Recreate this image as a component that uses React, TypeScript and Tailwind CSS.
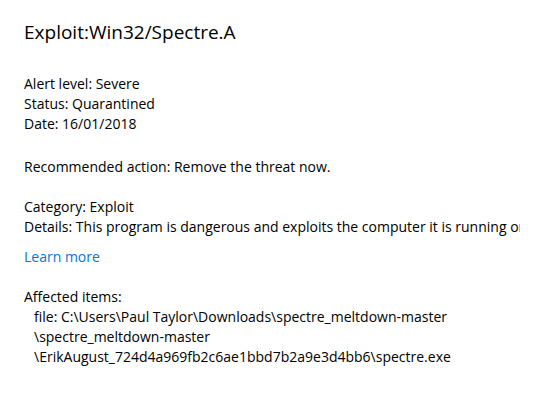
export default function App() {
  return (
    <div
      className="w-[544px] h-[402px] bg-white text-black overflow-hidden"
      style={{ fontFamily: '"Open Sans", "Noto Sans", sans-serif' }}
    >
      <div className="px-6 pt-[18px]">
        <h1 className="text-[19px] leading-[28px] font-normal">Exploit:Win32/Spectre.A</h1>

        <div className="mt-[28px] text-[14px] leading-[20px]">
          <p>Alert level: Severe</p>
          <p>Status: Quarantined</p>
          <p>Date: 16/01/2018</p>
        </div>

        <p className="mt-[23px] text-[14px] leading-[20px]">Recommended action: Remove the threat now.</p>

        <div className="mt-[20px] text-[14px] leading-[20px]">
          <p>Category: Exploit</p>
          <p className="whitespace-nowrap overflow-hidden">
            Details: This program is dangerous and exploits the computer it is running on.
          </p>
        </div>

        <a href="#" className="block w-fit mt-[10px] text-[14px] leading-[20px] text-[#0078d7]">
          Learn more
        </a>

        <div className="mt-[20px] text-[14px] leading-[20px]">
          <p>Affected items:</p>
          <div className="pl-[10px]">
            <p>file: C:\Users\Paul Taylor\Downloads\spectre_meltdown-master</p>
            <p>\spectre_meltdown-master</p>
            <p>\ErikAugust_724d4a969fb2c6ae1bbd7b2a9e3d4bb6\spectre.exe</p>
          </div>
        </div>
      </div>
    </div>
  );
}
